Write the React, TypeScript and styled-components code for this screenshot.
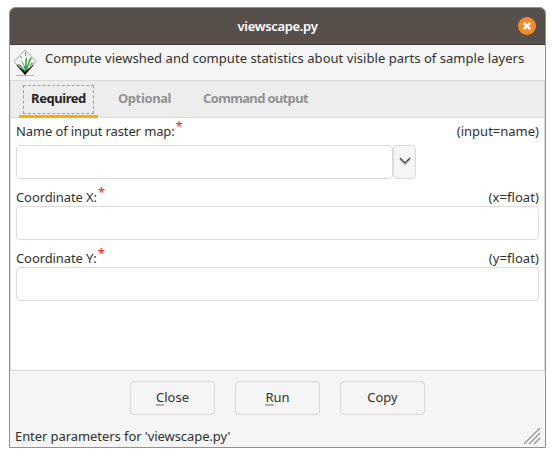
import React from "react";
import styled, { createGlobalStyle } from "styled-components";

const GlobalStyle = createGlobalStyle`
  * { box-sizing: border-box; }
  body { margin: 0; background: #fff; overflow: hidden; }
  button, input { font: inherit; color: inherit; outline: none; }
`;

const Desktop = styled.div`
  padding: 7px 9px;
  height: 457px;
  background: #fff;
`;

const Window = styled.main`
  display: flex;
  flex-direction: column;
  width: 537px;
  height: 441px;
  border: 1px solid #919191;
  border-radius: 6px 6px 0 0;
  background: #f5f5f5;
  color: #303030;
  font: 13px/18px "Noto Sans", "Open Sans", sans-serif;
  overflow: hidden;
`;

const Text = styled.span<{ $spacing?: number }>`
  white-space: nowrap;
  letter-spacing: ${(p) => p.$spacing ?? 0}px;
`;

const TitleBar = styled.header`
  display: grid;
  grid-template-columns: 1fr auto 1fr;
  align-items: center;
  height: 37px;
  flex: none;
  padding: 0 9px;
  background: #574f4a;
  border-bottom: 1px solid #443c38;
  color: #fff;
  font-weight: 600;
`;

const CloseIcon = styled.button`
  justify-self: end;
  width: 18px;
  height: 18px;
  padding: 0;
  border: 0;
  border-radius: 50%;
  background: #f48b2a;
  svg { display: block; }
`;

const Description = styled.div`
  display: flex;
  height: 35px;
  flex: none;
  padding: 4px 3px 0;
  gap: 8px;
  svg { flex: none; }
`;

const Notebook = styled.section`
  display: flex;
  flex-direction: column;
  height: 291px;
  flex: none;
  border: 1px solid #d9d9d9;
  background: #fff;
`;

const TabBar = styled.nav`
  display: flex;
  height: 37px;
  flex: none;
  padding-left: 8px;
  background: #ededed;
  border-bottom: 1px solid #d9d9d9;
`;

const Tab = styled.button<{ $active?: boolean; $width: number }>`
  width: ${(p) => p.$width}px;
  height: 37px;
  padding: 4px 4px 1px;
  border: 0;
  border-bottom: 3px solid ${(p) => (p.$active ? "#ffab00" : "transparent")};
  background: transparent;
  color: ${(p) => (p.$active ? "#252525" : "#929292")};
  font-weight: 700;
`;

const TabFace = styled.span<{ $focused?: boolean }>`
  display: flex;
  align-items: center;
  justify-content: center;
  height: 29px;
  padding-bottom: 3px;
  border: 1px dashed ${(p) => (p.$focused ? "#a0a0a0" : "transparent")};
`;

const Form = styled.div`
  display: flex;
  flex-direction: column;
  padding: 4px 5px 0;
`;

const Field = styled.div<{ $labelHeight: number; $labelTop?: number }>`
  display: grid;
  grid-template-rows: ${(p) => p.$labelHeight}px 34px;
  > :first-child { padding-top: ${(p) => p.$labelTop ?? 0}px; }
`;

const LabelRow = styled.div`
  display: flex;
  justify-content: space-between;
  align-items: flex-start;
`;

const Label = styled.label`
  display: flex;
`;

const Required = styled.span`
  margin: -5px 0 0 1px;
  color: #f11;
`;

const Input = styled.input<{ $width?: number }>`
  width: ${(p) => (p.$width ? `${p.$width}px` : "100%")};
  height: 34px;
  padding: 0 8px;
  border: 1px solid #dcdcdc;
  border-radius: 4px;
  background: #fff;
`;

const Combo = styled.div`
  display: flex;
`;

const DropButton = styled.button`
  display: grid;
  place-items: center;
  width: 23px;
  height: 34px;
  padding: 0 0 2px;
  border: 1px solid #dadada;
  border-radius: 4px;
  background: #f5f5f5;
`;

const Actions = styled.div`
  display: flex;
  justify-content: center;
  gap: 20px;
  padding-top: 10px;
`;

const Action = styled.button`
  width: 85px;
  height: 34px;
  padding: 0 0 3px;
  border: 1px solid #d8d8d8;
  border-radius: 4px;
  background: #f5f5f5;
`;

const Mnemonic = styled.span`
  border-bottom: 2px solid #b1b1b1;
  display: inline-block;
  line-height: 14px;
`;

const StatusBar = styled.footer`
  display: flex;
  justify-content: space-between;
  margin-top: auto;
  height: 20px;
  padding: 0 4px 0 5px;
`;

const GrassLogo = () => (
  <svg width="24" height="28" viewBox="0 0 24 28" fill="none">
    <path d="M12 1 23 12.5 12 25 1 12.5Z" stroke="#a9a9a9" />
    <path d="m4 16 8 9 8-9" stroke="#444" strokeWidth="1.4" />
    <path d="m6 18 6 4 6-4-6 8Z" fill="#0b120b" />
    <path d="M12 22 10.5 16 7.5 11l3 3.5L12 18l.5-8 1.5-2-.5 10L17 9l2-1-2.5 6-2 5 4-5 2.5-.5-5 4L12 23 8 18l-4-3 4 1Z" fill="#2f9a36" />
    <path d="m12.3 3 .5 4M7.5 7l1 2" stroke="#46a545" />
    <path d="M3 26.5h18" stroke="#b5b5b5" />
  </svg>
);

const fields = [
  { name: "Coordinate X:", type: "(x=float)" },
  { name: "Coordinate Y:", type: "(y=float)" },
];

export default function App() {
  return (
    <Desktop>
      <GlobalStyle />
      <Window>
        <TitleBar>
          <span />
          <Text $spacing={-0.32}>viewscape.py</Text>
          <CloseIcon aria-label="Close window">
            <svg width="18" height="18"><path d="m5.8 5.8 6.4 6.4m0-6.4-6.4 6.4" stroke="#fff" strokeWidth="2.5" /></svg>
          </CloseIcon>
        </TitleBar>
        <Description>
          <GrassLogo />
          <Text $spacing={0.04}>Compute viewshed and compute statistics about visible parts of sample layers</Text>
        </Description>
        <Notebook>
          <TabBar>
            <Tab $active $width={79}><TabFace $focused><Text $spacing={-0.45}>Required</Text></TabFace></Tab>
            <Tab $width={93}><TabFace><Text $spacing={-0.38}>Optional</Text></TabFace></Tab>
            <Tab $width={129}><TabFace><Text $spacing={-0.67}>Command output</Text></TabFace></Tab>
          </TabBar>
          <Form>
            <Field $labelHeight={23}>
              <LabelRow>
                <Label><Text $spacing={-0.12}>Name of input raster map:</Text><Required>*</Required></Label>
                <Text>(input=name)</Text>
              </LabelRow>
              <Combo>
                <Input $width={377} aria-label="Name of input raster map" />
                <DropButton aria-label="Show maps">
                  <svg width="12" height="8" fill="none"><path d="m1 2 5 5 5-5" stroke="#bbb" strokeWidth="2" /><path d="m1 1 5 5 5-5" stroke="#444" strokeWidth="1.2" /></svg>
                </DropButton>
              </Combo>
            </Field>
            {fields.map((f) => (
              <Field key={f.name} $labelHeight={27} $labelTop={9}>
                <LabelRow>
                  <Label><Text $spacing={-0.1}>{f.name}</Text><Required>*</Required></Label>
                  <Text $spacing={0.08}>{f.type}</Text>
                </LabelRow>
                <Input aria-label={f.name} />
              </Field>
            ))}
          </Form>
        </Notebook>
        <Actions>
          <Action><Text><Mnemonic>C</Mnemonic>lose</Text></Action>
          <Action><Text><Mnemonic>R</Mnemonic>un</Text></Action>
          <Action><Text>Copy</Text></Action>
        </Actions>
        <StatusBar>
          <Text $spacing={-0.07}>Enter parameters for 'viewscape.py'</Text>
          <svg width="18" height="18" stroke="#999" strokeWidth="1.4"><path d="M1 17 17 1M6 17 17 6M11 17l6-6" /></svg>
        </StatusBar>
      </Window>
    </Desktop>
  );
}
